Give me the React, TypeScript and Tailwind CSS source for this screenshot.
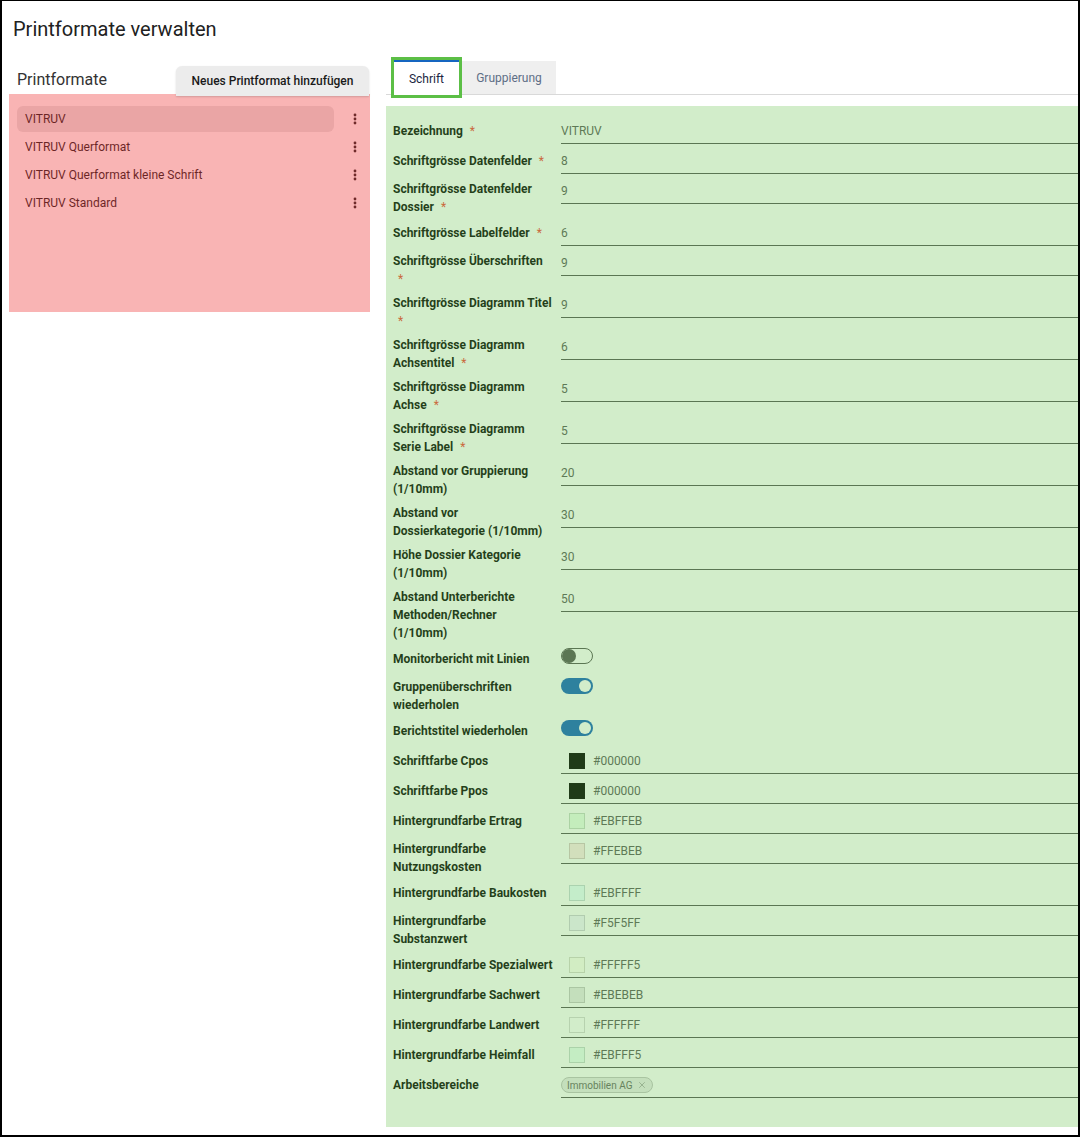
import { X } from "lucide-react";

type Field =
  | { kind: "text"; lines: string[]; value: string; required?: boolean }
  | { kind: "toggle"; lines: string[]; on: boolean }
  | { kind: "color"; lines: string[]; value: string }
  | { kind: "chips"; lines: string[]; chips: string[] };

const formats = [
  "VITRUV",
  "VITRUV Querformat",
  "VITRUV Querformat kleine Schrift",
  "VITRUV Standard",
];

const fields: Field[] = [
  { kind: "text", lines: ["Bezeichnung"], value: "VITRUV", required: true },
  { kind: "text", lines: ["Schriftgrösse Datenfelder"], value: "8", required: true },
  { kind: "text", lines: ["Schriftgrösse Datenfelder", "Dossier"], value: "9", required: true },
  { kind: "text", lines: ["Schriftgrösse Labelfelder"], value: "6", required: true },
  { kind: "text", lines: ["Schriftgrösse Überschriften", ""], value: "9", required: true },
  { kind: "text", lines: ["Schriftgrösse Diagramm Titel", ""], value: "9", required: true },
  { kind: "text", lines: ["Schriftgrösse Diagramm", "Achsentitel"], value: "6", required: true },
  { kind: "text", lines: ["Schriftgrösse Diagramm", "Achse"], value: "5", required: true },
  { kind: "text", lines: ["Schriftgrösse Diagramm", "Serie Label"], value: "5", required: true },
  { kind: "text", lines: ["Abstand vor Gruppierung", "(1/10mm)"], value: "20" },
  { kind: "text", lines: ["Abstand vor", "Dossierkategorie (1/10mm)"], value: "30" },
  { kind: "text", lines: ["Höhe Dossier Kategorie", "(1/10mm)"], value: "30" },
  { kind: "text", lines: ["Abstand Unterberichte", "Methoden/Rechner", "(1/10mm)"], value: "50" },
  { kind: "toggle", lines: ["Monitorbericht mit Linien"], on: false },
  { kind: "toggle", lines: ["Gruppenüberschriften", "wiederholen"], on: true },
  { kind: "toggle", lines: ["Berichtstitel wiederholen"], on: true },
  { kind: "color", lines: ["Schriftfarbe Cpos"], value: "#000000" },
  { kind: "color", lines: ["Schriftfarbe Ppos"], value: "#000000" },
  { kind: "color", lines: ["Hintergrundfarbe Ertrag"], value: "#EBFFEB" },
  { kind: "color", lines: ["Hintergrundfarbe", "Nutzungskosten"], value: "#FFEBEB" },
  { kind: "color", lines: ["Hintergrundfarbe Baukosten"], value: "#EBFFFF" },
  { kind: "color", lines: ["Hintergrundfarbe", "Substanzwert"], value: "#F5F5FF" },
  { kind: "color", lines: ["Hintergrundfarbe Spezialwert"], value: "#FFFFF5" },
  { kind: "color", lines: ["Hintergrundfarbe Sachwert"], value: "#EBEBEB" },
  { kind: "color", lines: ["Hintergrundfarbe Landwert"], value: "#FFFFFF" },
  { kind: "color", lines: ["Hintergrundfarbe Heimfall"], value: "#EBFFF5" },
  { kind: "chips", lines: ["Arbeitsbereiche"], chips: ["Immobilien AG"] },
];

function Kebab() {
  return (
    <svg width="4" height="12" viewBox="0 0 4 12" className="fill-[#1a1a1a]">
      <circle cx="2" cy="2" r="1.4" />
      <circle cx="2" cy="6" r="1.4" />
      <circle cx="2" cy="10" r="1.4" />
    </svg>
  );
}

function Toggle({ on }: { on: boolean }) {
  if (on) {
    return (
      <span className="flex h-4 w-8 items-center justify-end rounded-full bg-[#1565c0] px-[2px]">
        <span className="h-3 w-3 rounded-full bg-white" />
      </span>
    );
  }
  return (
    <span className="flex h-4 w-8 items-center rounded-full border border-[#555]">
      <span className="h-[14px] w-[14px] rounded-full bg-[#555]" />
    </span>
  );
}

function Label({ lines, required }: { lines: string[]; required?: boolean }) {
  return (
    <div className="flex min-h-[22px] w-[168px] shrink-0 flex-col justify-center text-[12px] font-bold leading-[18px] text-[#050505]">
      {lines.map((line, i) => (
        <div key={i} className="whitespace-nowrap">
          {line}
          {required && i === lines.length - 1 && (
            <span className={line ? "ml-[7px] font-normal text-[#f44336]" : "ml-[5px] font-normal text-[#f44336]"}>*</span>
          )}
        </div>
      ))}
    </div>
  );
}

function FieldValue({ field }: { field: Field }) {
  switch (field.kind) {
    case "text":
      return (
        <div className="flex h-6 flex-1 items-center border-b border-[#555] pb-px text-[12px] text-[#5a5a5a]">
          {field.value}
        </div>
      );
    case "toggle":
      return (
        <div className="flex h-6 flex-1 items-start">
          <Toggle on={field.on} />
        </div>
      );
    case "color":
      return (
        <div className="flex h-6 flex-1 items-center border-b border-[#555] pb-px pl-2">
          <span className="h-4 w-4 border border-black/15" style={{ backgroundColor: field.value }} />
          <span className="ml-2 text-[12px] text-[#5a5a5a]">{field.value}</span>
        </div>
      );
    case "chips":
      return (
        <div className="flex h-6 flex-1 items-center gap-1 border-b border-[#555] pb-px">
          {field.chips.map((chip) => (
            <span
              key={chip}
              className="flex h-4 items-center gap-[5px] rounded-full border border-[#c4c4c4] bg-[#ebebeb] pl-[5px] pr-[5px] text-[10px] text-[#666]"
            >
              {chip}
              <X size={10} strokeWidth={1.5} className="text-[#888]" />
            </span>
          ))}
        </div>
      );
  }
}

export default function App() {
  return (
    <div className="h-[1137px] w-[1080px] overflow-hidden border-x-2 border-b-2 border-t border-black bg-white font-[Roboto,sans-serif]">
      <h1 className="pl-[11px] pt-[16px] text-[20px] leading-6 text-[#212121]">Printformate verwalten</h1>

      <div className="mt-[16px] flex gap-4 pl-[7px]">
        {/* format list */}
        <aside className="w-[361px] pt-[9px]">
          <div className="flex h-[28px] items-center justify-between pl-2 pr-px">
            <span className="text-[16px] text-[#333]">Printformate</span>
            <button className="relative z-10 -mb-[2px] h-[30px] w-[193px] self-start rounded-t-md bg-[#ececec] text-[12px] font-medium text-[#1a1a1a] shadow-[0_1px_2px_rgba(0,0,0,0.15)]">
              Neues Printformat hinzufügen
            </button>
          </div>
          <div className="relative h-[218px] bg-white px-2 pt-3">
            <ul className="flex flex-col gap-[2px]">
              {formats.map((name, i) => (
                <li key={name} className="flex h-[26px] items-center">
                  <div
                    className={
                      i === 0
                        ? "flex h-full w-[317px] items-center rounded-md bg-[#e6e6e6] pl-2 text-[12px] text-[#111]"
                        : "flex h-full w-[317px] items-center pl-2 text-[12px] text-[#111]"
                    }
                  >
                    {name}
                  </div>
                  <div className="flex flex-1 justify-end pr-[5px]">
                    <Kebab />
                  </div>
                </li>
              ))}
            </ul>
            <div className="pointer-events-none absolute inset-0 bg-[rgba(239,68,68,0.4)]" />
          </div>
        </aside>

        {/* editor */}
        <section className="flex-1">
          <div className="flex h-[38px] items-end border-b border-[#d9d9d9] pl-[5px]">
            <div className="relative z-10 -mb-[4px] h-[41px] w-[71px] border-[3px] border-[#5cbf46] bg-white">
              <div className="flex h-full items-center justify-center border-t-2 border-[#1565c0] text-[12px] text-[#1b2540]">
                Schrift
              </div>
            </div>
            <div className="-mb-px flex h-[34px] w-[94px] items-center justify-center border-b border-[#d9d9d9] bg-[#efefef] text-[12px] text-[#5e6e86]">
              Gruppierung
            </div>
          </div>

          <div className="relative mt-[11px] bg-white pb-[29px] pl-[7px] pt-[14px]">
            <div className="flex flex-col gap-[6px]">
              {fields.map((field, i) => (
                <div key={i} className="flex items-start">
                  <Label lines={field.lines} required={field.kind === "text" && field.required} />
                  <FieldValue field={field} />
                </div>
              ))}
            </div>
            <div className="pointer-events-none absolute inset-0 bg-[rgba(107,194,80,0.3)]" />
          </div>
        </section>
      </div>
    </div>
  );
}
